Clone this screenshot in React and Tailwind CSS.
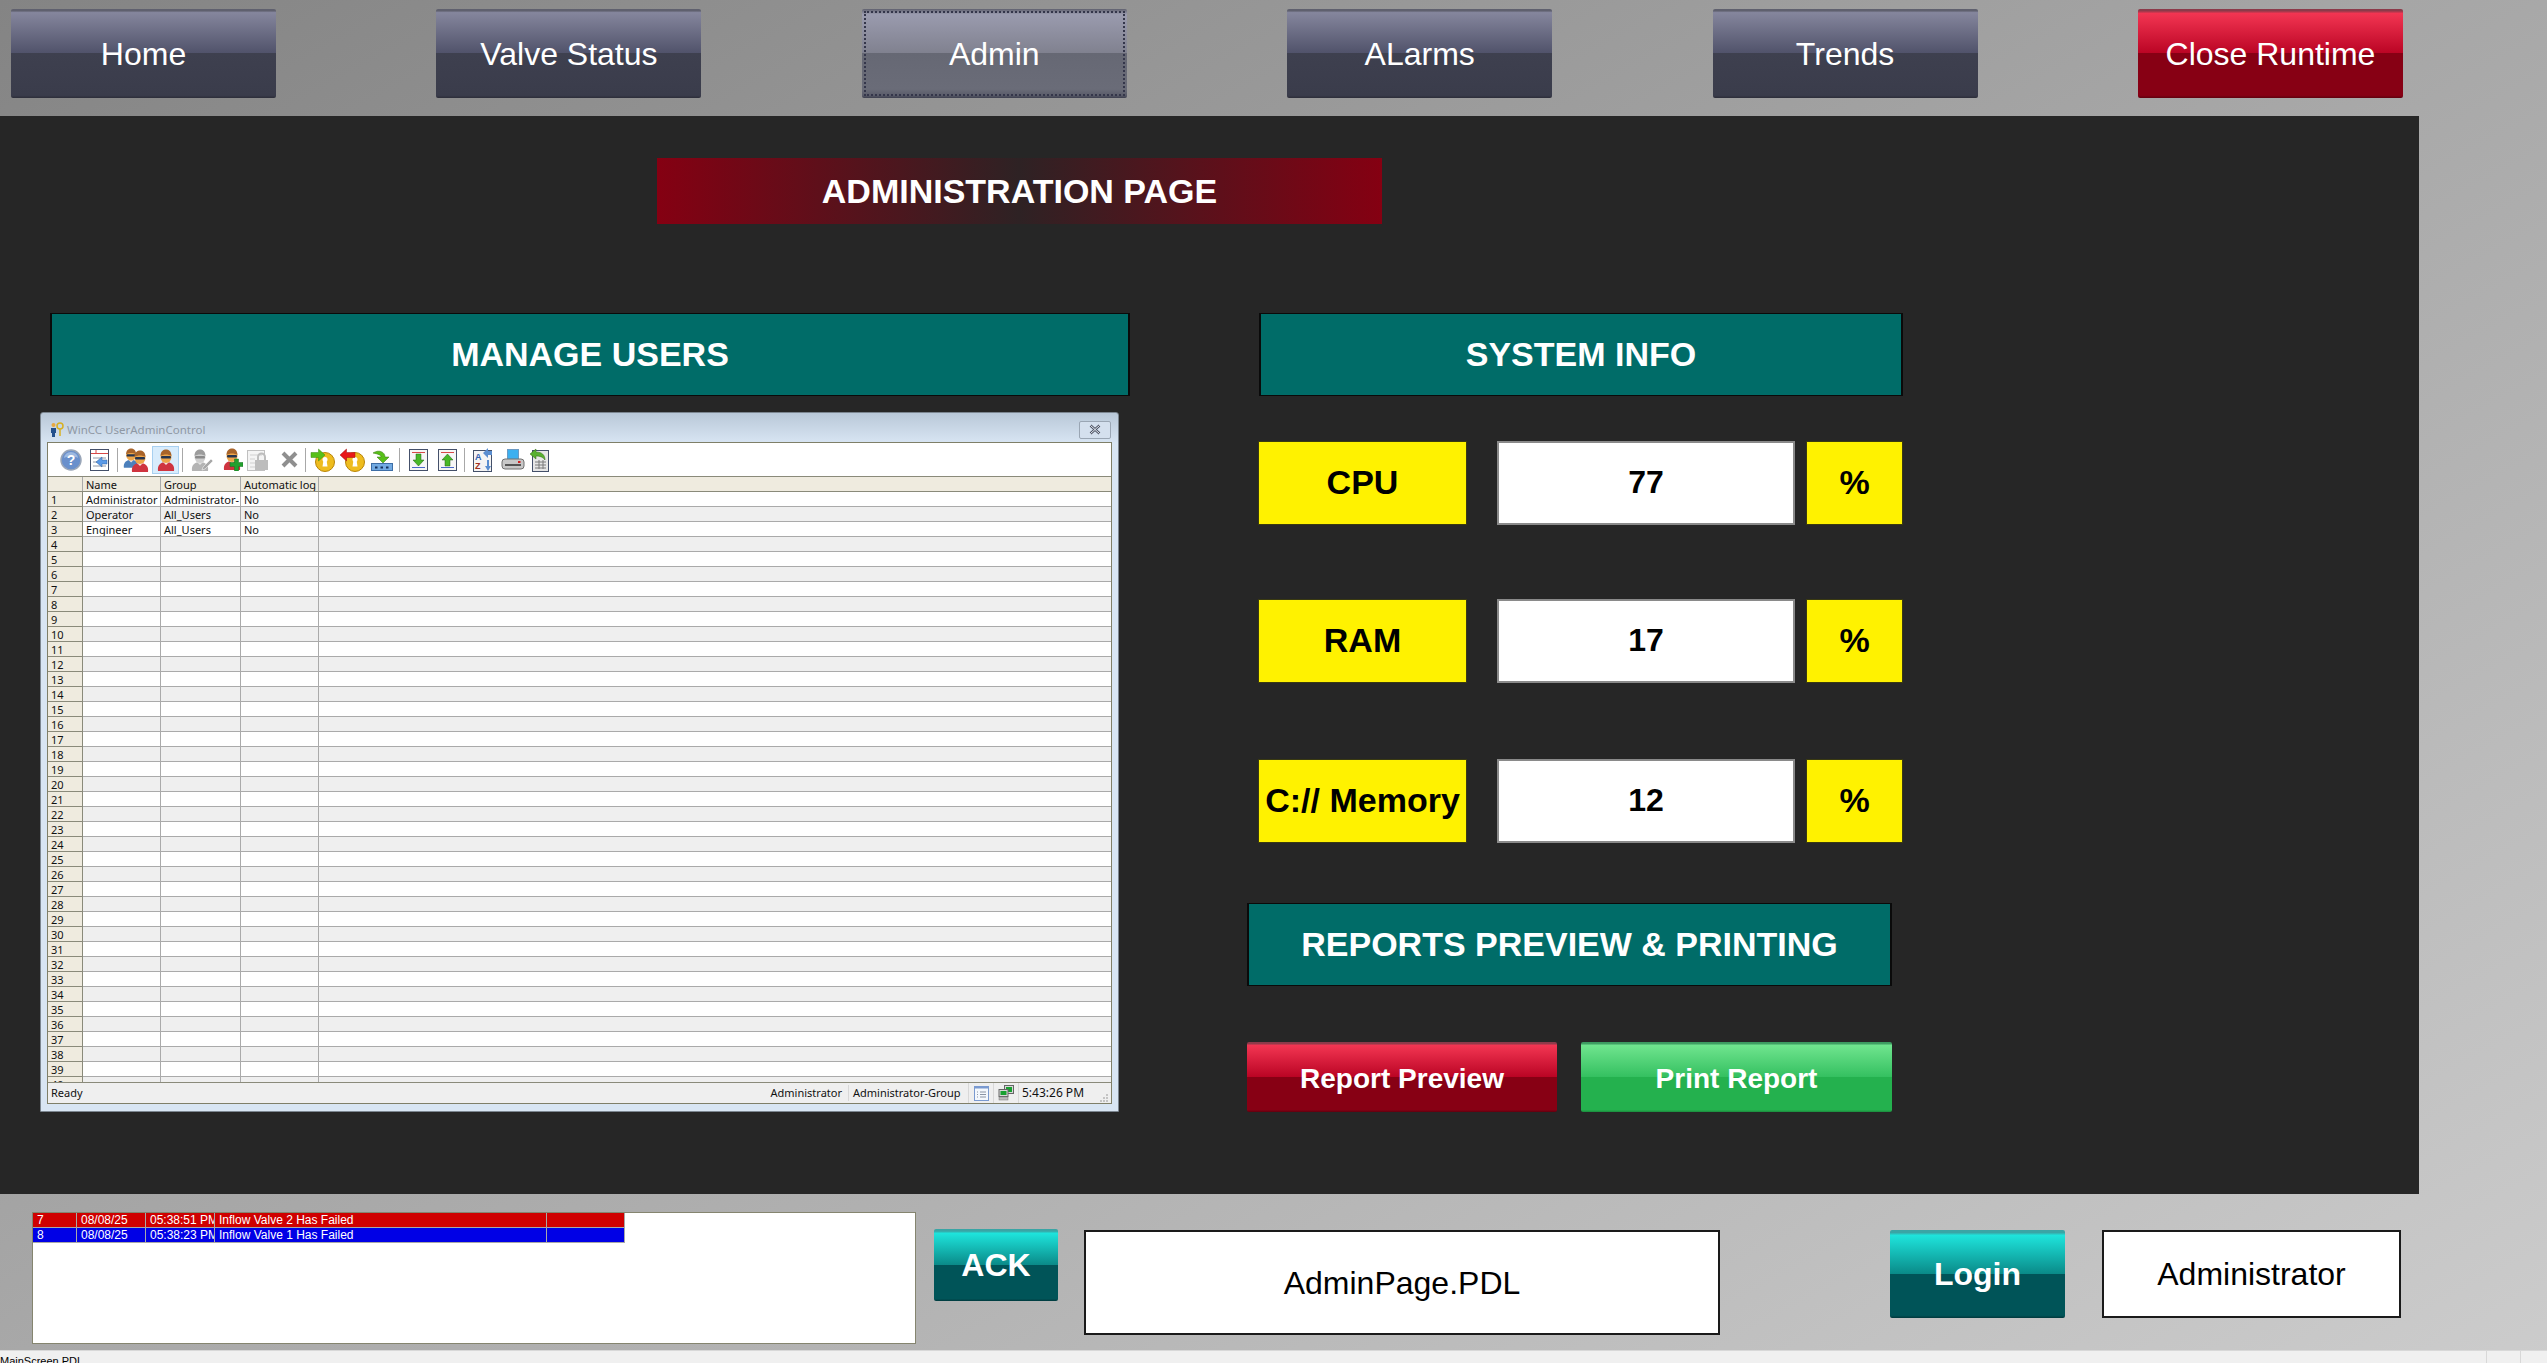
import React from "react";

const sans = "font-['Liberation_Sans',Arial,sans-serif]";
const navGloss = "bg-[linear-gradient(180deg,#5f606e_0%,#5f606e_2%,#85869d_4%,#50526a_50%,#3e404f_50%,#3a3c4b_97%,#2c2d39_100%)]";
const redGloss = "bg-[linear-gradient(180deg,#8c3a4a_0%,#8c3a4a_2%,#f23552_5%,#ba0424_50%,#870014_50%,#870014_97%,#5f000e_100%)]";
const greenGloss = "bg-[linear-gradient(180deg,#3c9a60_0%,#3c9a60_2%,#6fe48e_5%,#34c060_50%,#24b14e_50%,#24b14e_97%,#1b8a3d_100%)]";
const tealGloss = "bg-[linear-gradient(180deg,#3aa5a5_0%,#3aa5a5_3%,#1ee4dc_6%,#0a8a88_50%,#005458_50%,#005458_97%,#00383c_100%)]";

const navItems = ["Home", "Valve Status", "Admin", "ALarms", "Trends"];
const users = [
  ["Administrator", "Administrator-", "No"],
  ["Operator", "All_Users", "No"],
  ["Engineer", "All_Users", "No"],
];
const gauges = [
  { label: "CPU", value: "77", gap: "" },
  { label: "RAM", value: "17", gap: "mt-[74px]" },
  { label: "C:// Memory", value: "12", gap: "mt-[76px]" },
];
const rowNumbers = Array.from({ length: 40 }, (_, i) => i + 1);

function Person({ x = 0, y = 0, shirt = "#cf3440", grey = false }) {
  return (
    <g transform={`translate(${x} ${y})`}>
      <path d="M1 22c-1-6 3-9 8-9s9 3 8 9z" fill={grey ? "#b4b4b4" : shirt} />
      <path d="M6 13l3 3 3-3z" fill={grey ? "#e4e4e4" : "#f4e4e0"} />
      <ellipse cx="9" cy="8" rx="5.500" ry="6" fill={grey ? "#cfcfcf" : "#eea64a"} />
      <path d="M3.500 7c0-5 3-6.500 5.500-6.500s5.500 1.500 5.500 6.500c-3-2-8-2-11 0z" fill={grey ? "#9c9c9c" : "#a8642a"} />
      <rect x="4" y="7" width="10" height="2.500" rx="1" fill={grey ? "#8a8a8a" : "#25344f"} />
    </g>
  );
}

function KeyArrow({ flip, color, edge }) {
  return (
    <svg width="26" height="24" viewBox="0 0 26 24">
      <circle cx="15" cy="14" r="9.500" fill="#eebc1e" stroke="#b88408" />
      <circle cx="15" cy="11.500" r="2.500" fill="#fff" />
      <path d="M13.500 12h3l1 6.500h-5z" fill="#fff" />
      <path d={flip ? "M0 7l6.500-6v3.500H15v5H6.500V13z" : "M15 7L8.500 1v3.500H1v5h7.500V13z"} fill={color} stroke={edge} strokeWidth=".5" />
    </svg>
  );
}

function DocArrow({ up }) {
  return (
    <svg width="19" height="22" viewBox="0 0 19 22">
      <rect x=".5" y=".5" width="18" height="21" fill="#f6f6f6" stroke="#44506a" />
      <path d="M3 3.500h13" stroke="#d84848" />
      <path d="M3 18.500h13" stroke="#4868c8" />
      <path d={up ? "M9.500 5l5.500 6h-3v6H7v-6H4z" : "M9.500 17l5.500-6h-3V5H7v6H4z"} fill="#48b828" stroke="#206010" strokeWidth=".5" />
    </svg>
  );
}

function Toolbar() {
  const Slot = ({ w, children }) => <span className={`flex items-center justify-center ${w}`}>{children}</span>;
  const Line = () => <span className="h-[24px] w-px bg-[#a8a8a8]" />;
  return (
    <div className="flex h-[34px] shrink-0 items-center border-b border-[#8a8a7a] bg-white pl-[9px]">
      <Slot w="w-[28px]">
        <svg width="22" height="22" viewBox="0 0 22 22">
          <circle cx="11" cy="11" r="10" fill="#6a90cc" stroke="#9aa6b8" strokeWidth="1.500" />
          <path d="M4 9a7 6 0 0 1 14 0c-3-2-10-2-14 0z" fill="#9cb8e0" />
          <text x="11" y="16" textAnchor="middle" fontSize="14" fontWeight="700" fill="#fff" fontFamily="Liberation Sans">?</text>
        </svg>
      </Slot>
      <Slot w="w-[28px]">
        <svg width="19" height="22" viewBox="0 0 19 22">
          <rect x=".5" y=".5" width="18" height="21" fill="#fff" stroke="#44506a" />
          <path d="M1 4.500h17M6 1v3.500" stroke="#d84848" />
          <path d="M3 9h13M3 13h4M3 17h13" stroke="#9098a8" />
          <path d="M6 13l6-5v3h5v4h-5v3z" fill="#5a9ae8" stroke="#2c5c9c" strokeWidth=".5" />
        </svg>
      </Slot>
      <Slot w="w-[9px]"><Line /></Slot>
      <Slot w="w-[28px]">
        <svg width="26" height="24" viewBox="0 0 26 24">
          <g transform="scale(.9)"><Person shirt="#4c80bc" /></g>
          <Person x={8} y={2} />
        </svg>
      </Slot>
      <span className="ml-[2px] flex h-[28px] w-[27px] items-center justify-center border border-[#a8d0f0] bg-[#d8ecfc]">
        <svg width="18" height="22" viewBox="0 0 18 22"><Person /></svg>
      </span>
      <Slot w="w-[6px]"><Line /></Slot>
      <Slot w="w-[34px]">
        <svg width="22" height="22" viewBox="0 0 22 22">
          <Person grey />
          <path d="M11 21l1-3 8-8 2 2-8 8z" fill="#a8a8a8" stroke="#fff" strokeWidth=".5" />
        </svg>
      </Slot>
      <Slot w="w-[28px]">
        <svg width="20" height="23" viewBox="0 0 20 23">
          <Person />
          <path d="M11.500 11h4v3.500H20v4h-4.500V23h-4v-4.500H7v-4h4.500z" fill="#22a02e" stroke="#14701e" strokeWidth=".5" />
        </svg>
      </Slot>
      <Slot w="w-[22px]">
        <svg width="22" height="22" viewBox="0 0 22 22">
          <rect x=".5" y="1.500" width="17" height="20" fill="#f4f4f4" stroke="#c0c0c0" />
          <path d="M3 6h12M3 10h5M3 14h5M3 18h5" stroke="#d0d0d0" />
          <rect x="8" y="11" width="13" height="10" fill="#bdbdbd" />
          <path d="M11 11V8a3.500 3.500 0 0 1 7 0v3" fill="none" stroke="#bdbdbd" strokeWidth="2" />
        </svg>
      </Slot>
      <span className="ml-[5px] flex w-[30px] items-center justify-center">
        <svg width="17" height="17" viewBox="0 0 17 17">
          <path d="M2 2l13 13M15 2L2 15" stroke="#8f8f8f" strokeWidth="4" />
        </svg>
      </span>
      <Slot w="w-[3px]"><Line /></Slot>
      <Slot w="w-[32px]"><KeyArrow color="#58c018" edge="#3a8a10" /></Slot>
      <Slot w="w-[28px]"><KeyArrow flip color="#e81818" edge="#a01010" /></Slot>
      <Slot w="w-[30px]">
        <svg width="22" height="22" viewBox="0 0 22 22">
          <rect x=".5" y="14.500" width="21" height="7" fill="#72aae2" stroke="#3e6ea6" />
          <path d="M4 18.500h2.500M9.500 18.500H12M15 18.500h2.500" stroke="#12305c" strokeWidth="2" />
          <path d="M2 4c6-4 12-1 12 4h4l-6 6-6-6h4c0-2-3-3-8-4z" fill="#58c018" stroke="#307008" strokeWidth=".5" />
        </svg>
      </Slot>
      <Slot w="w-[4px]"><Line /></Slot>
      <Slot w="w-[34px]"><DocArrow /></Slot>
      <Slot w="w-[24px]"><DocArrow up /></Slot>
      <Slot w="w-[10px]"><Line /></Slot>
      <Slot w="w-[28px]">
        <svg width="20" height="24" viewBox="0 0 20 24">
          <rect x=".5" y="2.500" width="18" height="21" fill="#f4f4f4" stroke="#44506a" />
          <text x="2" y="11.500" fontSize="9" fontWeight="700" fill="#3060b0" fontFamily="Liberation Sans">A</text>
          <text x="2" y="21" fontSize="9" fontWeight="700" fill="#a03020" fontFamily="Liberation Sans">Z</text>
          <path d="M10 5l5-5v3h4v4h-4v3zM15 23l-3-5h2v-6h2v6h2z" fill="#5a8ed0" />
        </svg>
      </Slot>
      <Slot w="w-[32px]">
        <svg width="24" height="22" viewBox="0 0 24 22">
          <rect x="6.500" y=".5" width="11" height="11" fill="#3cb0f0" stroke="#6a9ac4" />
          <rect x="1" y="10" width="22" height="10" rx="3" fill="#c8c8c8" stroke="#707070" />
          <rect x="4" y="15" width="16" height="2" fill="#555" />
          <rect x="17" y="12" width="2.500" height="2" fill="#d02020" />
        </svg>
      </Slot>
      <Slot w="w-[22px]">
        <svg width="20" height="24" viewBox="0 0 20 24">
          <rect x="2.500" y="2.500" width="16" height="21" fill="#e6e6e6" stroke="#44506a" />
          <path d="M5 14h11M5 17h11M5 20h11M9 12v9M13 12v9" stroke="#7a7a7a" />
          <path d="M0 6l6-5v3c6 0 9 3 9 8-2-3-5-4-9-4v3z" fill="#58b030" stroke="#2f6a10" strokeWidth=".5" />
        </svg>
      </Slot>
    </div>
  );
}

function UserGrid() {
  const head = "h-full shrink-0 overflow-hidden whitespace-nowrap border-r border-[#aaa] pl-[3px]";
  const cell = "shrink-0 overflow-hidden whitespace-nowrap border-b border-r border-[#aaa] pl-[3px]";
  return (
    <div className="h-[605px] shrink-0 overflow-hidden bg-white leading-[15px]">
      <div className="flex h-[15px] border-b border-[#8a8a7a] bg-[#efebdf]">
        <span className={`w-[35px] ${head}`} />
        <span className={`w-[78px] ${head}`}>Name</span>
        <span className={`w-[80px] ${head}`}>Group</span>
        <span className={`w-[78px] ${head}`}>Automatic log</span>
      </div>
      {rowNumbers.map((n) => {
        const user = users[n - 1] || ["", "", ""];
        const zebra = n % 2 === 0 ? "bg-[#efefef]" : "bg-white";
        return (
          <div key={n} className={`flex h-[15px] ${zebra}`}>
            <span className="w-[35px] shrink-0 border-b border-r border-[#8a8a7a] bg-[#efebdf] pl-[3px]">{n}</span>
            <span className={`w-[78px] ${cell}`}>{user[0]}</span>
            <span className={`w-[80px] ${cell}`}>{user[1]}</span>
            <span className={`w-[78px] ${cell}`}>{user[2]}</span>
            <span className="flex-1 border-b border-[#aaa]" />
          </div>
        );
      })}
    </div>
  );
}

function UserAdminWindow() {
  return (
    <div className="mt-[16px] flex h-[700px] w-[1079px] flex-col rounded-t-[3px] border border-[#7c8690] bg-[linear-gradient(180deg,#b9c8d8_0%,#d8e5f3_4.3%,#d8e5f3_100%)] px-[6px] font-['Noto_Sans',sans-serif] text-[11px] text-[#111]">
      <div className="flex h-[29px] shrink-0 items-center justify-between pt-[4px]">
        <div className="flex items-center gap-[3px] pl-[3px] text-[11.5px] text-[#8f98a4]">
          <svg width="14" height="15" viewBox="0 0 14 15">
            <circle cx="3.500" cy="3" r="2" fill="#e8a840" />
            <path d="M1 6h5v5H5v4H2v-4H1z" fill="#24508c" />
            <circle cx="10" cy="4" r="3" fill="none" stroke="#d8b020" strokeWidth="1.500" />
            <path d="M10 7v7" stroke="#d8b020" strokeWidth="1.500" />
          </svg>
          <span>WinCC UserAdminControl</span>
        </div>
        <span className="mr-[1px] flex h-[18px] w-[32px] items-center justify-center rounded-[2px] border border-[#9aa6b4] bg-[#d4e0ee]">
          <svg width="12" height="11" viewBox="0 0 12 11">
            <path d="M1.500 1.500l9 8M10.500 1.500l-9 8" stroke="#4a5060" strokeWidth="2.500" />
            <path d="M1.500 1.500l9 8M10.500 1.500l-9 8" stroke="#e8eef6" strokeWidth="1" />
          </svg>
        </span>
      </div>
      <div className="flex h-[662px] shrink-0 flex-col border border-[#7f7f68]">
        <Toolbar />
        <UserGrid />
        <div className="flex h-[21px] shrink-0 items-center border-t border-[#8a8a7a] bg-[#efefef] pl-[3px]">
          <span className="mr-auto">Ready</span>
          <span className="pr-[6px]">Administrator</span>
          <span className="w-[120px] border-l border-[#d8d8d8] pl-[4px]">Administrator-Group</span>
          <span className="flex h-full w-[25px] items-center justify-center border-l border-[#d8d8d8]">
            <svg width="15" height="15" viewBox="0 0 15 15">
              <rect x=".5" y=".5" width="14" height="14" fill="#f4f8fd" stroke="#7a9ad0" />
              <rect x=".5" y=".5" width="14" height="2" fill="#7a9ad0" />
              <path d="M3 6h1M3 8.500h1M3 11h1M6 6h6M6 8.500h6M6 11h6" stroke="#8a94a4" />
            </svg>
          </span>
          <span className="flex h-full w-[26px] items-center justify-center border-x border-[#d8d8d8]">
            <svg width="16" height="16" viewBox="0 0 16 16">
              <rect x="6.500" y=".5" width="9" height="8" fill="#d8d8d8" stroke="#666" />
              <rect x="8" y="2" width="6" height="5" fill="#18a030" />
              <rect x="1" y="4.500" width="9" height="7" fill="#d8d8d8" stroke="#666" />
              <rect x="2.500" y="6" width="6" height="4" fill="#18a030" />
              <rect x="1" y="12" width="9" height="3" fill="#bbb" stroke="#777" strokeWidth=".5" />
            </svg>
          </span>
          <span className="w-[80px] whitespace-nowrap pl-[3px] text-[12px]">5:43:26 PM</span>
          <svg width="9" height="9" viewBox="0 0 9 9" className="mr-[3px] self-end">
            <path d="M7 0h2v2H7zM4 3h2v2H4zM7 3h2v2H7zM1 6h2v2H1zM4 6h2v2H4zM7 6h2v2H7z" fill="#c4c4c4" />
          </svg>
        </div>
      </div>
    </div>
  );
}

function Banner({ children, className = "" }) {
  return (
    <div className={`flex h-[83px] items-center justify-center border-x-2 border-y border-[#0a0a0a] bg-[#006c68] pb-[1px] text-[34px] font-bold text-white ${className}`}>
      {children}
    </div>
  );
}

function AlarmRow({ no, time, text, color }) {
  const cell = "overflow-hidden whitespace-nowrap border-r border-[#a8a8a8] pl-[4px]";
  return (
    <div className={`flex h-[15px] border-b border-[#a8a8a8] text-[12px] leading-[14px] text-white ${color}`}>
      <span className={`w-[44px] ${cell}`}>{no}</span>
      <span className={`w-[69px] ${cell}`}>08/08/25</span>
      <span className={`w-[69px] ${cell}`}>{time}</span>
      <span className={`w-[332px] ${cell}`}>{text}</span>
      <span className={`w-[78px] ${cell}`} />
    </div>
  );
}

export default function App() {
  return (
    <div className={`flex h-[1363px] w-[2547px] flex-col overflow-hidden bg-[linear-gradient(to_bottom_right,#848484,#cccccc)] ${sans}`}>
      <header className="flex h-[116px] shrink-0 gap-[160.4px] pl-[11px] pt-[9px]">
        {navItems.map((item) => (
          <button
            key={item}
            className={`flex h-[89px] w-[265px] items-center justify-center rounded-[2px] text-[32px] text-white ${
              item === "Admin"
                ? "bg-[linear-gradient(180deg,#5f606e_0%,#9a9bae_6%,#80818f_50%,#666874_50%,#6a6c78_90%,#5a5c6a_97%,#3c3e4e_100%)] outline-2 -outline-offset-4 outline-dotted outline-[#34364a]"
                : navGloss
            }`}
          >
            {item}
          </button>
        ))}
        <button className={`flex h-[89px] w-[265px] items-center justify-center rounded-[2px] text-[32px] text-white ${redGloss}`}>
          Close Runtime
        </button>
      </header>

      <main className="h-[1078px] w-[2419px] shrink-0 bg-[#262626] pt-[42px]">
        <div className="ml-[657px] flex h-[66px] w-[725px] items-center justify-center bg-[linear-gradient(90deg,#850012_0%,#2e2224_50%,#850012_100%)] text-[34px] font-bold text-white">
          ADMINISTRATION PAGE
        </div>

        <div className="mt-[89px] flex pl-[40px]">
          <section className="w-[1090px] shrink-0">
            <Banner className="ml-[10px] w-[1080px]">MANAGE USERS</Banner>
            <UserAdminWindow />
          </section>

          <section className="ml-[117px] w-[656px]">
            <Banner className="ml-[12px] w-[644px]">SYSTEM INFO</Banner>
            <div className="ml-[11px] mt-[45px]">
              {gauges.map((g) => (
                <div key={g.label} className={`flex h-[84px] text-[34px] font-bold text-black ${g.gap}`}>
                  <div className="flex w-[209px] items-center justify-center whitespace-nowrap border border-[#3a3a10] bg-[#fff200] pb-[2px]">{g.label}</div>
                  <div className="ml-[30px] flex w-[298px] items-center justify-center border-2 border-[#8a8a8a] bg-white pb-[2px] text-[32px]">{g.value}</div>
                  <div className="ml-[11px] flex w-[97px] items-center justify-center border border-[#3a3a10] bg-[#fff200] pb-[1px]">%</div>
                </div>
              ))}
            </div>
            <Banner className="mt-[60px] w-[645px]">REPORTS PREVIEW &amp; PRINTING</Banner>
            <div className="mt-[56px] flex w-[645px] gap-[24px]">
              <button className={`flex h-[70px] w-[310px] items-center justify-center rounded-[2px] pt-[3px] text-[28px] font-bold text-white ${redGloss}`}>Report Preview</button>
              <button className={`flex h-[70px] w-[311px] items-center justify-center rounded-[2px] pt-[3px] text-[28px] font-bold text-white ${greenGloss}`}>Print Report</button>
            </div>
          </section>
        </div>
      </main>

      <footer className="flex h-[156px] shrink-0 items-start">
        <div className="ml-[32px] mt-[18px] h-[132px] w-[884px] border border-[#85856f] bg-white">
          <div className="w-[592px]">
            <AlarmRow no="7" time="05:38:51 PM" text="Inflow Valve 2 Has Failed" color="bg-[#cf0000]" />
            <AlarmRow no="8" time="05:38:23 PM" text="Inflow Valve 1 Has Failed" color="bg-[#0000e6]" />
          </div>
        </div>
        <button className={`ml-[18px] mt-[35px] flex h-[72px] w-[124px] items-center justify-center rounded-[2px] text-[32px] font-bold text-white ${tealGloss}`}>ACK</button>
        <div className="ml-[26px] mt-[36px] flex h-[105px] w-[636px] items-center justify-center border-2 border-[#1a1a1a] bg-white text-[32px] text-black">AdminPage.PDL</div>
        <button className={`ml-[170px] mt-[36px] flex h-[88px] w-[175px] items-center justify-center rounded-[2px] text-[32px] font-bold text-white ${tealGloss}`}>Login</button>
        <div className="ml-[37px] mt-[36px] flex h-[88px] w-[299px] items-center justify-center border-2 border-[#1a1a1a] bg-white text-[32px] text-black">Administrator</div>
      </footer>

      <div className="flex h-[13px] shrink-0 justify-between overflow-hidden border-t border-[#d8d8d8] bg-[#f0f0f0] pt-[5px] text-[11px] leading-[11px] text-black">
        <span>MainScreen.PDL</span>
        <span className="-mt-[6px] mr-[26px] h-[13px] w-[35px] border-x border-[#d8d8d8]" />
      </div>
    </div>
  );
}
